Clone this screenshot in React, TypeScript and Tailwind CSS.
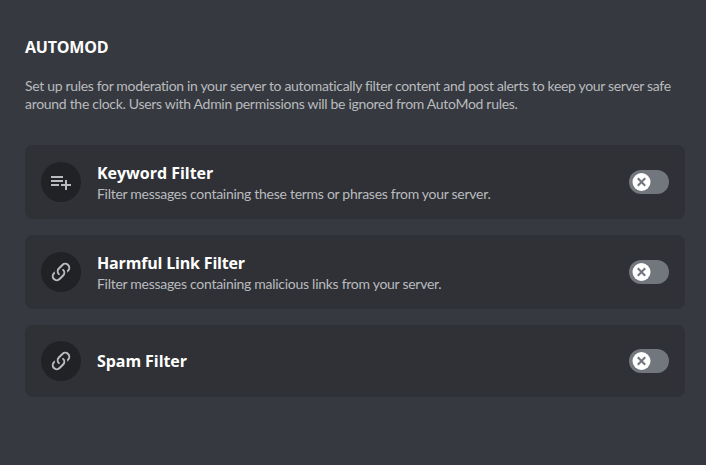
function Toggle() {
  return (
    <div className="flex h-6 w-10 shrink-0 items-center rounded-full bg-[#72767d] px-[3px]">
      <svg className="h-[18px] w-[19px]" viewBox="0 0 19 18">
        <circle cx="9.5" cy="9" r="9" fill="#fff" />
        <path d="M5.8 5.3l7.4 7.4M13.2 5.3l-7.4 7.4" stroke="#72767d" strokeWidth="2.1" />
      </svg>
    </div>
  );
}

function ListIcon() {
  return (
    <svg className="h-6 w-6" viewBox="0 0 24 24" fill="#b9bbbe">
      <path d="M14 10H2v2h12v-2zm0-4H2v2h12V6zm4 8v-4h-2v4h-4v2h4v4h2v-4h4v-2h-4zM2 16h8v-2H2v2z" />
    </svg>
  );
}

function LinkIcon() {
  return (
    <svg className="h-6 w-6" viewBox="0 0 24 24" fill="#b9bbbe">
      <path d="M10.59 13.41c.41.39.41 1.03 0 1.42-.39.39-1.03.39-1.42 0a5.003 5.003 0 0 1 0-7.07l3.54-3.54a5.003 5.003 0 0 1 7.07 0 5.003 5.003 0 0 1 0 7.07l-1.49 1.49c.01-.82-.12-1.64-.4-2.42l.47-.48a2.982 2.982 0 0 0 0-4.24 2.982 2.982 0 0 0-4.24 0l-3.53 3.53a2.982 2.982 0 0 0 0 4.24m2.82-4.24c.39-.39 1.03-.39 1.42 0a5.003 5.003 0 0 1 0 7.07l-3.54 3.54a5.003 5.003 0 0 1-7.07 0 5.003 5.003 0 0 1 0-7.07l1.49-1.49c-.01.82.12 1.64.4 2.43l-.47.47a2.982 2.982 0 0 0 0 4.24 2.982 2.982 0 0 0 4.24 0l3.53-3.53a2.982 2.982 0 0 0 0-4.24.973.973 0 0 1 0-1.42z" />
    </svg>
  );
}

const rules = [
  {
    title: "Keyword Filter",
    text: "Filter messages containing these terms or phrases from your server.",
    Icon: ListIcon,
    size: "h-[74px]",
    titleStyle: "tracking-[-0.02px]",
  },
  {
    title: "Harmful Link Filter",
    text: "Filter messages containing malicious links from your server.",
    Icon: LinkIcon,
    size: "h-[74px]",
    titleStyle: "tracking-[-0.18px]",
  },
  {
    title: "Spam Filter",
    text: "",
    Icon: LinkIcon,
    size: "h-[72px]",
    titleStyle: "tracking-[-0.07px]",
  },
];

export default function App() {
  return (
    <main className="h-[465px] w-[706px] bg-[#36393f] px-[25px] pt-[37px] font-['Open_Sans',sans-serif]">
      <h1 className="text-base leading-5 font-bold tracking-[-0.2px] text-white">AUTOMOD</h1>
      <p className="mt-5 font-['Lato',sans-serif] text-sm leading-[18px] tracking-[-0.3px] whitespace-nowrap text-[#b9bbbe]">
        <span className="tracking-[-0.33px]">
          Set up rules for moderation in your server to automatically filter content and post alerts to keep your server safe
        </span>
        <br />
        around the clock. Users with Admin permissions will be ignored from AutoMod rules.
      </p>
      <div className="mt-8 flex w-[660px] flex-col gap-4">
        {rules.map(({ title, text, Icon, size, titleStyle }) => (
          <section key={title} className={`${size} flex items-center rounded-lg bg-[#2f3136] px-4`}>
            <div className="mr-4 flex h-10 w-10 items-center justify-center rounded-full bg-[#202225]">
              <Icon />
            </div>
            <div className="flex-1 whitespace-nowrap">
              <h2 className={`${titleStyle} text-base leading-6 font-bold text-white`}>{title}</h2>
              {text && (
                <p className="font-['Lato',sans-serif] text-sm leading-[18px] tracking-[-0.28px] text-[#b9bbbe]">
                  {text}
                </p>
              )}
            </div>
            <Toggle />
          </section>
        ))}
      </div>
    </main>
  );
}
